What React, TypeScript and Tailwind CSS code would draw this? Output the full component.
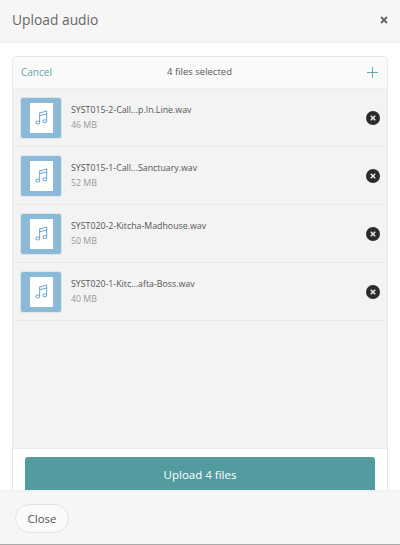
import React from "react";

const files = [
  { name: "SYST015-2-Call...p.In.Line.wav", size: "46 MB" },
  { name: "SYST015-1-Call...Sanctuary.wav", size: "52 MB" },
  { name: "SYST020-2-Kitcha-Madhouse.wav", size: "50 MB" },
  { name: "SYST020-1-Kitc...afta-Boss.wav", size: "40 MB" },
];

function Note() {
  return (
    <svg width="13" height="15" viewBox="0 0 13 16" fill="none" stroke="#6fa9d0" strokeWidth="1.1">
      <ellipse cx="2.5" cy="13.4" rx="2" ry="1.6" />
      <ellipse cx="10" cy="12" rx="2" ry="1.6" />
      <path d="M4.5 13V3.2L12 1.2V12M4.5 6.2L12 4.2" />
    </svg>
  );
}

function SmallX({ color, size }: { color: string; size: number }) {
  return (
    <svg width={size} height={size} viewBox="0 0 8 8" stroke={color} strokeWidth="2">
      <path d="M1 1L7 7M7 1L1 7" />
    </svg>
  );
}

export default function App() {
  return (
    <div className="w-[400px] h-[545px] bg-white flex flex-col overflow-hidden text-[#555] font-['Open_Sans',sans-serif]">
      <header className="h-[43px] shrink-0 bg-[#f6f6f6] border-b border-[#eeeeee] flex items-center justify-between pl-3 pr-[12px] pb-[2px]">
        <h1 className="text-[13.8px] text-[#666]">Upload audio</h1>
        <SmallX color="#666" size={8} />
      </header>
      <main className="flex-1 min-h-0 overflow-hidden px-3 pt-[13px]">
        <div className="h-[600px] border border-[#e8e8e8] rounded-[4px] flex flex-col overflow-hidden">
          <div className="h-[32px] shrink-0 bg-[#fafafa] border-b border-[#eeeeee] grid grid-cols-3 items-center pl-2 pr-[9px]">
            <button className="text-[10px] text-[#62a4a6] text-left">Cancel</button>
            <span className="text-[9.5px] text-[#555] text-center whitespace-nowrap">4 files selected</span>
            <svg className="justify-self-end" width="11" height="11" viewBox="0 0 11 11" stroke="#5fa8ad" strokeWidth="1"><path d="M5.5 0V11M0 5.5H11" /></svg>
          </div>
          <div className="h-[360px] shrink-0 bg-[#f3f3f3] border-b border-[#ececec]">
            {files.map((f) => (
              <div key={f.name} className="h-[58px] border-b border-[#e9e9e9] flex items-center pl-[7px] pr-[7px]">
                <div className="w-[42px] h-[42px] rounded-[3px] bg-[#8abad7] border border-[#dfe6ea] flex items-center justify-center">
                  <div className="w-[23px] h-[30px] bg-white flex items-center justify-center"><Note /></div>
                </div>
                <div className="ml-[9px] flex-1 min-w-0 -mt-[1px]">
                  <div className="text-[8.8px] leading-[13px] text-[#555]">{f.name}</div>
                  <div className="text-[8.8px] mt-[2px] leading-[12px] text-[#999]">{f.size}</div>
                </div>
                <div className="w-[14px] h-[14px] rounded-full bg-[#2b2b2b] flex items-center justify-center">
                  <SmallX color="#e8e8e8" size={6} />
                </div>
              </div>
            ))}
          </div>
          <div className="px-3 pt-2">
            <button className="w-full h-[50px] rounded-[3px] bg-[#529b9f] text-white text-[11.5px] font-medium pb-[14px]">Upload 4 files</button>
          </div>
        </div>
      </main>
      <footer className="h-[55px] shrink-0 bg-[#f6f6f6] border-t border-[#eeeeee] border-b border-b-[#a9a9a9] flex items-center pl-[15px]">
        <button className="h-[29px] w-[54px] mt-[2px] rounded-full bg-[#fafafa] border border-[#e3e3e3] text-[11.5px] text-[#555]">Close</button>
      </footer>
    </div>
  );
}
